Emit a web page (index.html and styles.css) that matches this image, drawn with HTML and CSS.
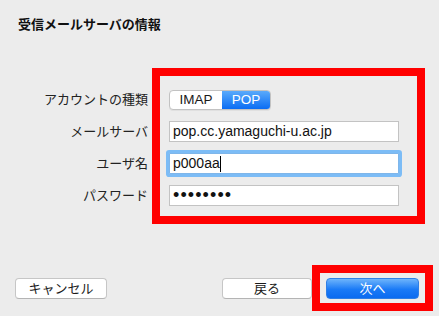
FILE: index.html
```html
<!DOCTYPE html>
<html lang="ja">
<head>
<meta charset="utf-8">
<link rel="stylesheet" href="styles.css">
</head>
<body>
<div class="dialog">
  <h1 class="title">受信メールサーバの情報</h1>
  <div class="form">
    <div class="label">アカウントの種類</div>
    <div class="segmented">
      <div class="seg seg-off">IMAP</div>
      <div class="seg seg-on">POP</div>
    </div>
    <div class="label">メールサーバ</div>
    <div class="field">pop.cc.yamaguchi-u.ac.jp</div>
    <div class="label">ユーザ名</div>
    <div class="field field-focus">p000aa<span class="caret"></span></div>
    <div class="label">パスワード</div>
    <div class="field field-pw">••••••••</div>
  </div>
  <div class="footer">
    <div class="btn btn-cancel">キャンセル</div>
    <div class="spacer"></div>
    <div class="btn btn-back">戻る</div>
    <div class="btn btn-next">次へ</div>
  </div>
  <div class="mark mark-form"></div>
  <div class="mark mark-next"></div>
</div>
</body>
</html>
```
FILE: styles.css
```css
html, body {
  margin: 0;
  padding: 0;
}
body {
  background: #ececec;
  font-family: "Liberation Sans", "Noto Sans CJK JP", sans-serif;
  color: #222;
}
.dialog {
  position: relative;
  width: 439px;
  height: 316px;
  display: flex;
  flex-direction: column;
  overflow: hidden;
}
.title {
  margin: 0;
  padding: 17px 0 0 18px;
  font-size: 13px;
  line-height: 16px;
  font-weight: bold;
  color: #111;
}
.form {
  margin-top: 57px;
  display: grid;
  grid-template-columns: 148px 230px;
  column-gap: 21px;
  grid-template-rows: 20px 21px 21px 21px;
  row-gap: 11px;
}
.label {
  font-size: 13px;
  line-height: 16px;
  text-align: right;
  align-self: center;
  color: #222;
}
.segmented {
  width: 102px;
  height: 20px;
  box-sizing: border-box;
  display: flex;
  border: 1px solid #c2c2c2;
  border-radius: 4px;
  overflow: hidden;
  background: #fff;
  box-shadow: 0 1px 0 rgba(0,0,0,0.05);
}
.seg {
  display: flex;
  align-items: center;
  justify-content: center;
  font-size: 13.5px;
  line-height: 18px;
}
.seg-off {
  width: 52px;
  color: #1a1a1a;
}
.seg-on {
  flex: 1;
  color: #fff;
  background: linear-gradient(#5aaafb, #0a6df4);
}
.field {
  box-sizing: border-box;
  height: 21px;
  border: 1px solid #c3c3c3;
  background: #fff;
  padding: 0 3px;
  font-size: 14px;
  line-height: 19px;
  color: #111;
  display: flex;
  align-items: center;
}
.field-focus {
  border-color: #7fb6ea;
  box-shadow: 0 0 0 3px #7cbcf6;
  border-radius: 1px;
}
.caret {
  display: inline-block;
  width: 1px;
  height: 16px;
  background: #000;
}
.field-pw {
  font-size: 18px;
  letter-spacing: 1.1px;
  padding-left: 3px;
}
.footer {
  margin-top: auto;
  padding: 0 20px 17px 15px;
  display: flex;
  align-items: center;
}
.spacer {
  flex: 1;
}
.btn {
  box-sizing: border-box;
  height: 21px;
  border: 1px solid #c6c6c6;
  border-bottom-color: #b4b4b4;
  border-radius: 4px;
  background: #fff;
  font-size: 13px;
  line-height: 19px;
  text-align: center;
  color: #1a1a1a;
}
.btn-cancel {
  width: 92px;
}
.btn-back {
  width: 90px;
  margin-right: 14px;
}
.btn-next {
  width: 93px;
  color: #fff;
  border-color: #2f7fe6;
  background: linear-gradient(#6db4fb, #1a7af6 55%, #0b6bf0);
}
.mark {
  position: absolute;
  box-sizing: border-box;
  border: 8px solid #ff0000;
}
.mark-form {
  left: 152px;
  top: 68px;
  width: 273px;
  height: 156px;
}
.mark-next {
  left: 312px;
  top: 265px;
  width: 121px;
  height: 46px;
}
```
